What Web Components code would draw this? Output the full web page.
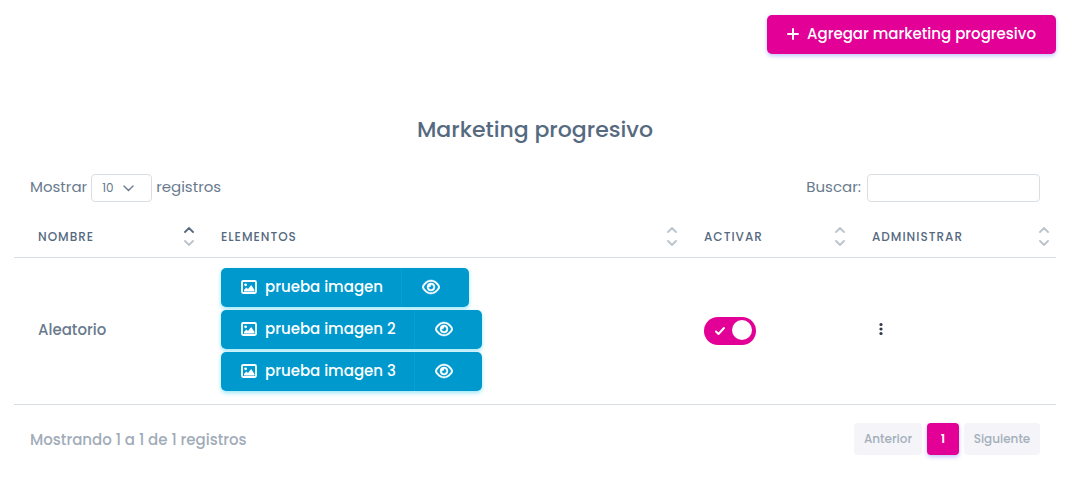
<!DOCTYPE html>
<html lang="es">
<head>
<meta charset="utf-8">
<title>Marketing progresivo</title>
<style>
  body { margin: 0; background: #fff; color: #677788; font: 400 15px/24px Poppins, Inter, sans-serif; }
</style>
</head>
<body>
<marketing-page></marketing-page>

<script>
const ICONS = {
  plus: '<svg viewBox="0 0 12 12" width="12" height="12" fill="none" stroke="currentColor" stroke-width="2" stroke-linecap="round"><path d="M6 1v10M1 6h10"/></svg>',
  image: '<svg viewBox="0 0 16 16" width="16" height="16"><rect x="1" y="2" width="14" height="12" rx="1.2" fill="none" stroke="currentColor" stroke-width="1.8"/><circle cx="4.6" cy="5.8" r="1.4" fill="currentColor"/><path d="M3 12.5V11l2.300-2.600L7 10l3.200-4L13.500 11v1.500z" fill="currentColor"/></svg>',
  eye: '<svg viewBox="0 0 576 512" width="18" height="16" fill="currentColor" stroke="currentColor" stroke-width="14"><path fill-rule="evenodd" d="M288 80c-65 0-119 30-159 68-38 35-65 77-79 108 14 31 41 73 79 108 40 38 94 68 159 68s119-30 159-68c38-35 65-77 79-108-14-31-41-73-79-108-40-38-94-68-159-68zM95 113c47-44 112-81 193-81s146 37 193 81c46 43 78 95 93 131 3 8 3 16 0 24-15 36-47 88-93 131-47 44-112 81-193 81s-146-37-193-81C49 356 17 304 2 268c-3-8-3-16 0-24 15-36 47-88 93-131zM288 336c44 0 80-36 80-80s-36-80-80-80h-2c1 5 2 11 2 16 0 35-29 64-64 64-5 0-11-1-16-2v2c0 44 36 80 80 80zm0-208a128 128 0 1 1 0 256 128 128 0 1 1 0-256z"/></svg>',
  up: '<svg viewBox="0 0 10 6" width="10" height="6" fill="none" stroke="currentColor" stroke-width="1.8" stroke-linecap="round"><path d="M1 5l4-4 4 4"/></svg>',
  down: '<svg viewBox="0 0 10 6" width="10" height="6" fill="none" stroke="currentColor" stroke-width="1.8" stroke-linecap="round"><path d="M1 1l4 4 4-4"/></svg>',
  check: '<svg viewBox="0 0 12 10" width="12" height="10" fill="none" stroke="currentColor" stroke-width="2" stroke-linecap="round" stroke-linejoin="round"><path d="M2 5.500L4.500 8 10 2"/></svg>',
  dots: '<svg viewBox="0 0 4 14" width="4" height="14" fill="currentColor"><circle cx="2" cy="2.500" r="1.600"/><circle cx="2" cy="7" r="1.600"/><circle cx="2" cy="11.500" r="1.600"/></svg>'
};
const BASE = `<style>
  :host { display: block; }
  * { box-sizing: border-box; }
  svg { display: block; flex: none; }
  button { font: inherit; border: 0; margin: 0; cursor: pointer; }
</style>`;

function define(name, render) {
  customElements.define(name, class extends HTMLElement {
    connectedCallback() {
      if (!this.shadowRoot) this.attachShadow({ mode: 'open' }).innerHTML = BASE + render(this);
    }
  });
}

define('add-button', () => `<style>
  button { display: flex; align-items: center; justify-content: center; gap: 8px; height: 39px; padding: 0 20px 1px;
    border-radius: 5px; background: #e20096; color: #fff; font-weight: 500; box-shadow: 0 2px 4px rgba(105,108,255,.4); }
</style>
<button type="button">${ICONS.plus}<span><slot></slot></span></button>`);

define('split-button', () => `<style>
  .group { display: inline-flex; border-radius: 5px; box-shadow: 0 2px 4px rgba(3,195,236,.4); vertical-align: top; }
  button { display: flex; align-items: center; gap: 8px; height: 39px; background: #0099ce; color: #fff; font-weight: 500; }
  .main { padding: 0 18px 1px 20px; border-radius: 5px 0 0 5px; }
  .view { padding: 0 29px 1px 20px; border-radius: 0 5px 5px 0; border-left: 1px solid #0a9fd2; }
</style>
<div class="group"><button type="button" class="main">${ICONS.image}<span><slot></slot></span></button><button type="button" class="view" aria-label="Ver">${ICONS.eye}</button></div>`);

define('toggle-switch', () => `<style>
  :host { padding-top: 2px; }
  label { display: flex; position: relative; width: 52px; height: 28px; cursor: pointer; }
  input { appearance: none; width: 100%; margin: 0; border-radius: 14px; background: #d0d5db; cursor: pointer; }
  input:checked { background: #e20096; }
  .check { position: absolute; left: 10px; top: 9px; color: #fff; }
  .knob { position: absolute; left: 4px; top: 3px; width: 20px; height: 20px; border-radius: 50%; background: #fff; }
  input:checked ~ .knob { left: 28px; }
</style>
<label><input type="checkbox" aria-label="Activar" checked><span class="check">${ICONS.check}</span><span class="knob"></span></label>`);

define('sort-header', el => `<style>
  :host { color: #566a7f; font: 500 12px/18px Poppins, Inter, sans-serif; letter-spacing: 1px; text-transform: uppercase; }
  .head { display: flex; align-items: center; justify-content: space-between; height: 40px; }
  .arrows { display: grid; gap: 7px; padding-bottom: 1px; color: #bbc3cb; }
  .asc { color: #566a7f; }
</style>
<div class="head"><slot></slot><span class="arrows"><span class="${el.hasAttribute('ascending') ? 'asc' : ''}">${ICONS.up}</span>${ICONS.down}</span></div>`);

define('table-controls', () => `<style>
  .bar { display: flex; justify-content: space-between; padding: 0 16px; }
  label { display: flex; align-items: center; gap: 4px; height: 28px; color: #697a8d; }
  .search { gap: 6px; }
  .text { padding-bottom: 2px; }
  .pick { display: grid; position: relative; }
  select, input { height: 28px; border: 1px solid #d9dee3; border-radius: 4px; background: #fff; color: #697a8d; font: 400 12px/18px Poppins, Inter, sans-serif; }
  select { appearance: none; width: 61px; padding: 0 10px; }
  .pick svg { position: absolute; right: 18px; top: 11px; pointer-events: none; }
  input { width: 173px; padding: 0 8px; }
</style>
<div class="bar">
  <label><span class="text">Mostrar</span><span class="pick"><select><option>10</option><option>25</option><option>50</option></select><svg viewBox="0 0 11 7" width="11" height="7" fill="none" stroke="currentColor" stroke-width="1.4" stroke-linecap="round"><path d="M1 1l4.500 4.500L10 1"/></svg></span><span class="text">registros</span></label>
  <label class="search"><span class="text">Buscar:</span><input type="search"></label>
</div>`);

define('table-pager', () => `<style>
  .bar { display: flex; justify-content: space-between; padding: 0 16px; }
  .info { padding-top: 5px; color: #a1acb8; font-weight: 500; }
  nav { display: flex; gap: 5px; }
  button { min-width: 32px; height: 32px; border-radius: 4px; padding: 0; background: #f4f4f9; color: #a4afba; font: 500 12px/18px Poppins, Inter, sans-serif; }
  .prev { width: 68px; } .next { width: 76px; }
  .current { background: #e20096; color: #fff; font-weight: 600; box-shadow: 0 2px 4px rgba(105,108,255,.4); }
</style>
<div class="bar">
  <span class="info">Mostrando 1 a 1 de 1 registros</span>
  <nav aria-label="Paginación"><button type="button" class="prev">Anterior</button><button type="button" class="current">1</button><button type="button" class="next">Siguiente</button></nav>
</div>`);

define('campaign-table', () => `<style>
  table { width: 100%; border-collapse: separate; border-spacing: 0; table-layout: fixed; }
  th { padding: 0 3px 0 24px; border-bottom: 1px solid #d9dee3; text-align: left; }
  th:last-child { padding-right: 7px; }
  td { padding: 10px 24px 13px; border-bottom: 1px solid #d9dee3; vertical-align: middle; }
  .name { width: 183px; } .active { width: 168px; } .admin { width: 208px; }
  td.label { color: #697a8d; font-weight: 500; }
  .items { display: grid; gap: 3px; }
  .menu { padding: 6px 7px 4px; background: none; color: #32394a; }
</style>
<table>
  <thead><tr>
    <th class="name" scope="col"><sort-header ascending>Nombre</sort-header></th>
    <th scope="col"><sort-header>Elementos</sort-header></th>
    <th class="active" scope="col"><sort-header>Activar</sort-header></th>
    <th class="admin" scope="col"><sort-header>Administrar</sort-header></th>
  </tr></thead>
  <tbody><tr>
    <td class="label">Aleatorio</td>
    <td><div class="items"><split-button>prueba imagen</split-button><split-button>prueba imagen 2</split-button><split-button>prueba imagen 3</split-button></div></td>
    <td><toggle-switch></toggle-switch></td>
    <td><button type="button" class="menu" aria-label="Opciones">${ICONS.dots}</button></td>
  </tr></tbody>
</table>`);

define('marketing-page', () => `<style>
  main { padding: 15px 15px 16px 14px; }
  .top { display: flex; justify-content: flex-end; }
  h1 { margin: 60px 0 28px; color: #566a7f; font-size: 22px; line-height: 32px; font-weight: 500; text-align: center; }
  campaign-table { margin: 15px 0 18px; }
</style>
<main>
  <div class="top"><add-button>Agregar marketing progresivo</add-button></div>
  <h1>Marketing progresivo</h1>
  <table-controls></table-controls>
  <campaign-table></campaign-table>
  <table-pager></table-pager>
</main>`);
</script>
</body>
</html>
